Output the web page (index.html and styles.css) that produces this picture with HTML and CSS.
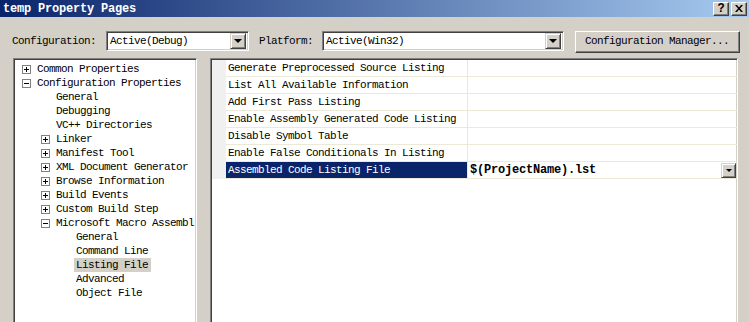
FILE: index.html
```html
<!DOCTYPE html>
<html lang="en">
<head>
    <meta charset="UTF-8">
    <title>temp Property Pages</title>
    <link rel="stylesheet" href="styles.css">
</head>
<body>

<div class="dialog">
    <div class="titlebar">
        <span class="title">temp Property Pages</span>
        <div class="title-buttons">
            <div class="tbtn">?</div>
            <div class="tbtn">
                <svg width="8" height="7" viewBox="0 0 8 7"><path d="M0 0h2l2 2.5L6 0h2L5 3.5 8 7H6L4 4.5 2 7H0l3-3.5z" fill="#000"/></svg>
            </div>
        </div>
    </div>

    <div class="toolbar">
        <span class="label">Configuration:</span>
        <div class="combo combo-config">
            <span class="combo-text">Active(Debug)</span>
            <div class="combo-btn"><span class="arrow"></span></div>
        </div>
        <span class="label label-platform">Platform:</span>
        <div class="combo combo-platform">
            <span class="combo-text">Active(Win32)</span>
            <div class="combo-btn"><span class="arrow"></span></div>
        </div>
        <div class="button">Configuration Manager...</div>
    </div>

    <div class="panels">
        <div class="tree sunken">
            <div class="node lvl0"><span class="box plus"></span>Common Properties</div>
            <div class="node lvl0"><span class="box minus"></span>Configuration Properties</div>
            <div class="node leaf1">General</div>
            <div class="node leaf1">Debugging</div>
            <div class="node leaf1">VC++ Directories</div>
            <div class="node lvl1"><span class="box plus"></span>Linker</div>
            <div class="node lvl1"><span class="box plus"></span>Manifest Tool</div>
            <div class="node lvl1"><span class="box plus"></span>XML Document Generator</div>
            <div class="node lvl1"><span class="box plus"></span>Browse Information</div>
            <div class="node lvl1"><span class="box plus"></span>Build Events</div>
            <div class="node lvl1"><span class="box plus"></span>Custom Build Step</div>
            <div class="node lvl1"><span class="box minus"></span>Microsoft Macro Assembl</div>
            <div class="node leaf2"><span class="item">General</span></div>
            <div class="node leaf2"><span class="item">Command Line</span></div>
            <div class="node leaf2"><span class="item selected">Listing File</span></div>
            <div class="node leaf2"><span class="item">Advanced</span></div>
            <div class="node leaf2"><span class="item">Object File</span></div>
        </div>

        <div class="grid sunken">
            <div class="prop">
                <div class="gutter"></div>
                <div class="name">Generate Preprocessed Source Listing</div>
                <div class="value"></div>
            </div>
            <div class="prop">
                <div class="gutter"></div>
                <div class="name">List All Available Information</div>
                <div class="value"></div>
            </div>
            <div class="prop">
                <div class="gutter"></div>
                <div class="name">Add First Pass Listing</div>
                <div class="value"></div>
            </div>
            <div class="prop">
                <div class="gutter"></div>
                <div class="name">Enable Assembly Generated Code Listing</div>
                <div class="value"></div>
            </div>
            <div class="prop">
                <div class="gutter"></div>
                <div class="name">Disable Symbol Table</div>
                <div class="value"></div>
            </div>
            <div class="prop">
                <div class="gutter"></div>
                <div class="name">Enable False Conditionals In Listing</div>
                <div class="value"></div>
            </div>
            <div class="prop active">
                <div class="gutter"></div>
                <div class="name">Assembled Code Listing File</div>
                <div class="value">
                    <span class="value-text">$(ProjectName).lst</span>
                    <div class="drop-btn"><span class="arrow small"></span></div>
                </div>
            </div>
        </div>
    </div>
</div>

</body>
</html>
```

FILE: styles.css
```css
body {
    margin: 0;
    background-color: #d4d0c8;
    font-family: 'Liberation Mono', monospace;
    font-size: 11px;
    letter-spacing: -0.6px;
    color: #000;
}

.dialog {
    width: 749px;
    height: 322px;
    overflow: hidden;
}

.titlebar {
    height: 17px;
    display: flex;
    align-items: center;
    justify-content: space-between;
    background: linear-gradient(to right, #0a246a, #a6caf0);
}

.title {
    padding-left: 3px;
    color: #fff;
    font-weight: bold;
    font-size: 12px;
    letter-spacing: -0.2px;
}

.title-buttons {
    display: flex;
    gap: 2px;
    margin-right: 2px;
}

.tbtn {
    width: 14px;
    height: 12px;
    display: flex;
    align-items: center;
    justify-content: center;
    background-color: #d4d0c8;
    border: 1px solid;
    border-color: #fff #404040 #404040 #fff;
    box-shadow: inset -1px -1px 0 #808080;
    font-weight: bold;
    font-size: 12px;
    letter-spacing: 0;
    line-height: 12px;
}

.toolbar {
    height: 41px;
    display: flex;
    align-items: flex-start;
    padding-left: 12px;
    box-sizing: border-box;
    padding-top: 14px;
}

.label {
    line-height: 20px;
}

.label-platform {
    margin-left: 10px;
}

.sunken {
    border: 1px solid;
    border-color: #808080 #fff #fff #808080;
    box-shadow: inset 1px 1px 0 #404040, inset -1px -1px 0 #d4d0c8;
}

.combo {
    height: 20px;
    box-sizing: border-box;
    display: flex;
    align-items: center;
    justify-content: space-between;
    background-color: #fff;
    border: 1px solid;
    border-color: #808080 #fff #fff #808080;
    box-shadow: inset 1px 1px 0 #404040, inset -1px -1px 0 #d4d0c8;
    padding: 2px;
}

.combo-config {
    width: 143px;
    margin-left: 10px;
}

.combo-platform {
    width: 242px;
    margin-left: 9px;
}

.combo-text {
    padding-left: 1px;
}

.combo-btn, .drop-btn {
    width: 16px;
    height: 16px;
    box-sizing: border-box;
    display: flex;
    align-items: center;
    justify-content: center;
    background-color: #d4d0c8;
    border: 1px solid;
    border-color: #d4d0c8 #404040 #404040 #d4d0c8;
    box-shadow: inset 1px 1px 0 #fff, inset -1px -1px 0 #808080;
}

.arrow {
    width: 0;
    height: 0;
    border-left: 4px solid transparent;
    border-right: 4px solid transparent;
    border-top: 4px solid #000;
}

.arrow.small {
    border-left-width: 3px;
    border-right-width: 3px;
    border-top-width: 3px;
}

.button {
    width: 165px;
    height: 22px;
    box-sizing: border-box;
    margin-left: 11px;
    padding-left: 9px;
    line-height: 19px;
    border: 1px solid;
    border-color: #fff #404040 #404040 #fff;
    box-shadow: inset -1px -1px 0 #808080;
}

.panels {
    display: flex;
    gap: 13px;
    padding-left: 13px;
}

.tree {
    width: 184px;
    height: 300px;
    box-sizing: border-box;
    background-color: #fff;
    padding-top: 3px;
    overflow: hidden;
}

.node {
    height: 14px;
    display: flex;
    align-items: center;
    white-space: nowrap;
}

.lvl0 { padding-left: 8px; }
.lvl1 { padding-left: 27px; }
.leaf1 { padding-left: 42px; }
.leaf2 { padding-left: 60px; }

.box {
    position: relative;
    flex: none;
    width: 9px;
    height: 9px;
    box-sizing: border-box;
    margin-right: 6px;
    border: 1px solid #808080;
    background-color: #fff;
}

.box::before, .box.plus::after {
    content: "";
    position: absolute;
    background-color: #000;
}

.box::before {
    left: 1px;
    top: 3px;
    width: 5px;
    height: 1px;
}

.box.plus::after {
    left: 3px;
    top: 1px;
    width: 1px;
    height: 5px;
}

.item {
    padding: 0 3px 0 2px;
    line-height: 14px;
}

.item.selected {
    background-color: #d4d0c8;
}

.grid {
    width: 528px;
    height: 300px;
    box-sizing: border-box;
    background-color: #fff;
    padding: 1px 0 0 1px;
}

.prop {
    height: 17px;
    display: flex;
}

.gutter {
    width: 14px;
    background-color: #f0f0f0;
}

.name {
    width: 239px;
    padding-left: 2px;
    line-height: 17px;
    border-right: 1px solid #ece9d8;
    border-bottom: 1px solid #ece9d8;
    white-space: nowrap;
    overflow: hidden;
}

.value {
    flex: 1;
    display: flex;
    align-items: center;
    justify-content: space-between;
    padding-left: 2px;
    border-bottom: 1px solid #ece9d8;
}

.prop.active .name {
    background-color: #0a246a;
    color: #fff;
}

.value-text {
    font-weight: bold;
    font-size: 12px;
    letter-spacing: -0.2px;
}

.drop-btn {
    width: 15px;
    height: 15px;
    margin-right: 1px;
}
```
